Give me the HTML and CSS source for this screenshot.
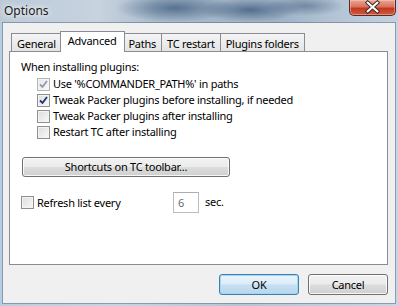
FILE: index.html
```html
<!DOCTYPE html>
<html>
<head>
<meta charset="utf-8">
<link rel="stylesheet" href="styles.css">
</head>
<body>
<div class="window">
  <div class="titlebar">
    <span class="title">Options</span>
    <span class="close">
      <svg width="47" height="16" viewBox="0 0 47 16">
        <path d="M18.5 3.5 L28.5 12.5 M28.5 3.5 L18.5 12.5" stroke="#3a2a2a" stroke-width="4.2" stroke-linecap="square" fill="none"/>
        <path d="M18.5 3.5 L28.5 12.5 M28.5 3.5 L18.5 12.5" stroke="#ffffff" stroke-width="2.2" stroke-linecap="square" fill="none"/>
      </svg>
    </span>
  </div>
  <div class="client">
    <div class="tabs">
      <div class="tab">General</div>
      <div class="tab active">Advanced</div>
      <div class="tab">Paths</div>
      <div class="tab">TC restart</div>
      <div class="tab">Plugins folders</div>
    </div>
    <div class="panel">
      <div class="heading">When installing plugins:</div>
      <div class="checks">
        <div class="row"><span class="cb dim"><svg width="11" height="11" viewBox="0 0 11 11"><path d="M2 5.5 L4.5 8 L9 2" stroke="#8f9ab2" stroke-width="1.8" fill="none"/></svg></span><span>Use '%COMMANDER_PATH%' in paths</span></div>
        <div class="row"><span class="cb"><svg width="11" height="11" viewBox="0 0 11 11"><path d="M2 5.5 L4.5 8 L9 2" stroke="#21346f" stroke-width="1.8" fill="none"/></svg></span><span>Tweak Packer plugins before installing, if needed</span></div>
        <div class="row"><span class="cb"></span><span>Tweak Packer plugins after installing</span></div>
        <div class="row"><span class="cb"></span><span>Restart TC after installing</span></div>
      </div>
      <div class="btn shortcuts">Shortcuts on TC toolbar...</div>
      <div class="refresh">
        <div class="row refresh-label"><span class="cb"></span><span>Refresh list every</span></div>
        <span class="num">6</span>
        <span class="sec">sec.</span>
      </div>
    </div>
    <div class="footer">
      <div class="btn default">OK</div>
      <div class="btn">Cancel</div>
    </div>
  </div>
</div>
</body>
</html>
```

FILE: styles.css
```css
html, body {
  margin: 0;
  padding: 0;
}
body {
  width: 398px;
  height: 306px;
  overflow: hidden;
  font-family: "Noto Sans", "Open Sans", sans-serif;
  font-size: 11px;
  letter-spacing: -0.25px;
  color: #000;
}
.window {
  width: 398px;
  height: 306px;
  display: flex;
  flex-direction: column;
  background: linear-gradient(90deg, #b9cde2 0%, #c4d5e6 30%, #b2c6da 60%, #c6d6e7 100%);
}
.titlebar {
  height: 23px;
  display: flex;
  align-items: flex-start;
  background:
    radial-gradient(ellipse 60px 14px at 175px 8px, rgba(60,90,125,0.75), rgba(60,90,125,0) 100%),
    radial-gradient(ellipse 50px 12px at 250px 10px, rgba(50,80,115,0.7), rgba(50,80,115,0) 100%),
    radial-gradient(ellipse 40px 10px at 305px 6px, rgba(70,95,125,0.55), rgba(70,95,125,0) 100%),
    linear-gradient(90deg, #bccad8 0%, #c7d3df 25%, #a9bacb 40%, #9fb2c6 70%, #b4c5d6 85%, #c4d2df 100%);
  flex-shrink: 0;
}
.title {
  margin: 3px 0 0 4px;
  font-size: 12px;
  line-height: 15px;
  letter-spacing: 0;
  color: #1a1a1a;
  text-shadow: 0 0 5px rgba(255,255,255,0.95), 0 0 8px rgba(255,255,255,0.8);
}
.close {
  margin-left: auto;
  margin-right: 2px;
  width: 47px;
  height: 16px;
  box-sizing: border-box;
  border: 1px solid #5a2a22;
  border-top: none;
  border-radius: 0 0 5px 5px;
  background: linear-gradient(#e9a595 0%, #d9735d 45%, #c3381f 55%, #cf5a3e 100%);
  box-shadow: inset 0 0 0 1px rgba(255,210,200,0.45);
  display: flex;
}
.close svg {
  margin-top: -1px;
}
.client {
  flex: 1;
  margin: 0 3px 3px 3px;
  background: #f0f0f0;
  box-shadow: 0 0 0 1px rgba(90,110,135,0.55);
  display: flex;
  flex-direction: column;
  padding: 8px 7px 8px 6px;
}
.tabs {
  display: flex;
  align-items: flex-end;
  height: 21px;
  margin-left: 2px;
  margin-bottom: -1px;
  position: relative;
  z-index: 1;
}
.tab {
  height: 18px;
  box-sizing: border-box;
  padding: 1px 5px 0 5px;
  border: 1px solid #898c95;
  border-bottom: none;
  background: linear-gradient(#f5f5f5, #e4e4e4);
  line-height: 17px;
  margin-left: -1px;
  margin-bottom: 1px;
  white-space: nowrap;
}
.tab:first-child {
  margin-left: 0;
}
.tab.active {
  height: 21px;
  background: #ffffff;
  padding: 0 8px 0 7px;
  margin: 0 -2px 0 -2px;
  line-height: 18px;
  position: relative;
  z-index: 2;
}
.panel {
  flex: 1;
  background: #ffffff;
  border: 1px solid #898c95;
  padding: 7px 0 0 11px;
  display: flex;
  flex-direction: column;
  align-items: flex-start;
}
.heading {
  line-height: 16px;
  height: 16px;
}
.checks {
  margin: 1px 0 0 16px;
  display: flex;
  flex-direction: column;
}
.row {
  display: flex;
  align-items: center;
  height: 16px;
  line-height: 16px;
  white-space: nowrap;
}
.cb {
  width: 13px;
  height: 13px;
  box-sizing: border-box;
  border: 1px solid #8e8f8f;
  background: linear-gradient(135deg, #dcdcdc 0%, #ebebeb 50%, #f8f8f8 100%);
  box-shadow: inset 0 0 0 1px #f4f4f4;
  margin-right: 3px;
  display: flex;
  align-items: center;
  justify-content: center;
  flex-shrink: 0;
}
.cb.dim {
  background: linear-gradient(135deg, #e6e6e6 0%, #f0f0f0 50%, #fafafa 100%);
  border-color: #b5b5b5;
}
.btn {
  box-sizing: border-box;
  height: 21px;
  border: 1px solid #707070;
  border-radius: 3px;
  background: linear-gradient(#f2f2f2 0%, #ebebeb 49%, #dddddd 51%, #cfcfcf 100%);
  box-shadow: inset 0 0 0 1px rgba(255,255,255,0.8);
  display: flex;
  align-items: center;
  justify-content: center;
  line-height: 18px;
}
.shortcuts {
  margin: 17px 0 0 1px;
  width: 208px;
  height: 20px;
}
.refresh {
  margin-top: 15px;
  display: flex;
  align-items: center;
}
.refresh-label {
  width: 152px;
}
.num {
  width: 26px;
  height: 21px;
  box-sizing: border-box;
  border: 1px solid #b9bcc3;
  border-top-color: #abadb3;
  color: #6d6d6d;
  padding-left: 4px;
  line-height: 19px;
}
.sec {
  margin-left: 6px;
  margin-top: -2px;
}
.footer {
  display: flex;
  justify-content: flex-end;
  gap: 9px;
  margin-top: 9px;
}
.footer .btn {
  width: 80px;
}
.footer .btn.default {
  border-color: #3c7fb1;
  background: linear-gradient(#eaf5fc 0%, #dcecf8 49%, #c7e0f2 51%, #b8d6ed 100%);
  box-shadow: inset 0 0 0 1px #a6d6f2;
}
```
